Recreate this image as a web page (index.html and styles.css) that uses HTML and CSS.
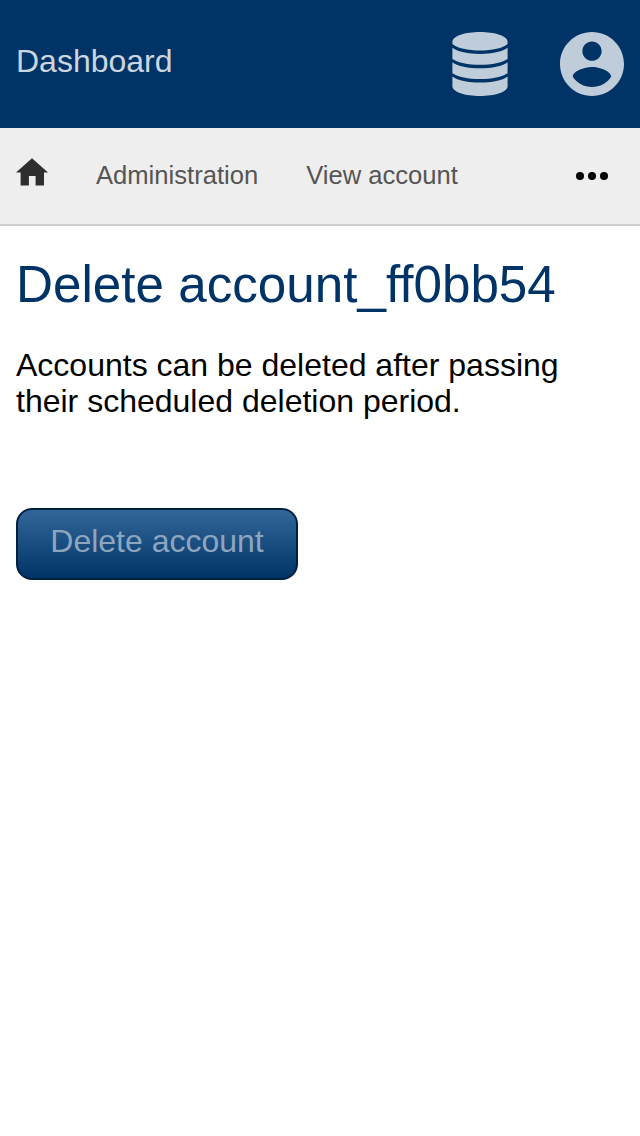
FILE: index.html
```html
<!DOCTYPE html>
<html lang="en">
<head>
<meta charset="utf-8">
<title>Delete account</title>
<link rel="stylesheet" href="styles.css">
</head>
<body>
<header class="header">
  <a class="brand">Dashboard</a>
  <div class="header-icons">
    <svg class="icon" viewBox="0 0 64 64"><path d="M4.400 9.500C5 4 17 0 32 0S59 4 59.600 9.500V12C55 16.300 44 18.500 32 18.500S9 16.300 4.400 12z"/><path d="M4.400 15.800C10 19.800 20 22 32 22S54 19.800 59.600 15.800V27C54 30.700 44 32.800 32 32.800S10 30.700 4.400 27z"/><path d="M4.400 30.200C10 34.200 20 36.300 32 36.300S54 34.200 59.600 30.200V41.300C54 45 44 47.100 32 47.100S10 45 4.400 41.300z"/><path d="M4.400 44.500C10 48.500 20 50.600 32 50.600S54 48.500 59.600 44.500V54.500C59 60 47 64 32 64S5 60 4.400 54.500z"/></svg>
    <svg class="icon" viewBox="2 2 20 20"><path d="M12 2C6.480 2 2 6.480 2 12s4.480 10 10 10 10-4.480 10-10S17.520 2 12 2zm0 3c1.660 0 3 1.340 3 3s-1.340 3-3 3-3-1.340-3-3 1.340-3 3-3zm0 14.200c-2.500 0-4.710-1.280-6-3.220.030-1.990 4-3.080 6-3.080 1.990 0 5.970 1.090 6 3.080-1.290 1.940-3.500 3.220-6 3.220z"/></svg>
  </div>
</header>
<nav class="nav">
  <svg class="home" viewBox="0 0 32 28"><path d="M16 .2 32 14.500H28V27.600H19.600V18H12.900V27.600H4.600V14.500H0z"/></svg>
  <a class="nav-link">Administration</a>
  <a class="nav-link">View account</a>
  <svg class="more" viewBox="0 0 32 8"><circle cx="4" cy="4" r="4"/><circle cx="16" cy="4" r="4"/><circle cx="28" cy="4" r="4"/></svg>
</nav>
<main class="content">
  <h1 class="title">Delete account_ff0bb54</h1>
  <p class="message">Accounts can be deleted after passing their scheduled deletion period.</p>
  <button class="button" disabled>Delete account</button>
</main>
</body>
</html>
```
FILE: styles.css
```css
* { box-sizing: border-box; }
body { margin: 0; background: #fff; color: #000; font-family: "Liberation Sans", Arial, sans-serif; }
.header { display: flex; justify-content: space-between; height: 128px; padding: 32px 16px; background: #036; }
.brand { font-size: 32px; line-height: 58px; color: #ccd6e0; }
.header-icons { display: flex; gap: 48px; }
.icon { width: 64px; height: 64px; fill: #bfccd9; }
.nav { display: flex; align-items: center; height: 98px; padding: 0 32px 2px 16px; background: #eee; border-bottom: 2px solid #ccc; }
.home { width: 32px; height: 28px; margin-top: -6px; fill: #2e2e2e; }
.nav-link { margin-left: 48px; font-size: 25.6px; line-height: 30px; color: #555; }
.more { width: 32px; height: 8px; margin: 2px 0 0 auto; }
.content { padding: 29px 16px; }
.title { margin: 0; font-size: 51.2px; line-height: 59px; font-weight: 400; color: #036; }
.message { margin: 33px 0 89px; font-size: 32px; line-height: 36px; }
.button { display: block; width: 282px; height: 72px; padding: 0; padding-bottom: 6px; border: 2px solid #00203f; border-radius: 16px; background: linear-gradient(#369, #036); color: #8da6bf; font: 32px "Liberation Sans", Arial, sans-serif; }
```
